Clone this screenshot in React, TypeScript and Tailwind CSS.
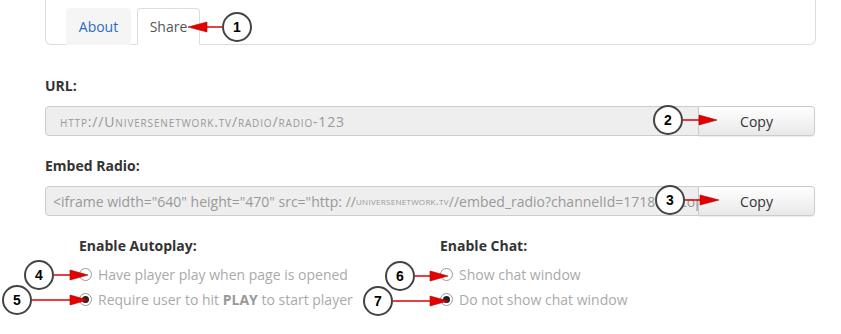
import React from 'react';

const font = { fontFamily: '"Open Sans", "Liberation Sans", sans-serif' };

function Callout({ n, x, y }: { n: number; x: number; y: number }) {
  return (
    <div
      className="absolute flex h-[30px] w-[30px] items-center justify-center rounded-full border-2 border-[#444] bg-white text-[14px] font-bold text-black"
      style={{ left: x - 15, top: y - 15, fontFamily: '"Liberation Sans", Arial, sans-serif' }}
    >
      {n}
    </div>
  );
}

// arrow: line from x1 to base of head, head points to tip
function Arrow({ x1, base, tip, y }: { x1: number; base: number; tip: number; y: number }) {
  return (
    <g>
      <line x1={x1} y1={y} x2={base} y2={y} stroke="#e10000" strokeWidth="1.5" />
      <polygon points={`${base},${y - 5} ${tip},${y} ${base},${y + 5}`} fill="#e30000" stroke="#b00000" strokeWidth="0.6" />
    </g>
  );
}

function CopyField({ children, pad }: { children: React.ReactNode; pad: string }) {
  return (
    <div className="flex h-[30px]">
      <div
        className={`flex flex-1 items-center overflow-hidden whitespace-nowrap rounded-l-[4px] border border-[#ccc] bg-[#eee] text-[14px] text-[#999] ${pad}`}
      >
        {children}
      </div>
      <button className="w-[116px] rounded-r-[4px] border border-l-0 border-[#ccc] bg-gradient-to-b from-white to-[#e8e8e8] text-[14px] text-[#333] shadow-[0_1px_1px_rgba(0,0,0,0.08)]">
        Copy
      </button>
    </div>
  );
}

function Radio({ checked, children }: { checked?: boolean; children: React.ReactNode }) {
  return (
    <div className="flex h-[25px] items-center gap-[6px] text-[14px] text-[#aaa]">
      <span className="flex h-[13px] w-[13px] items-center justify-center rounded-full border border-[#999] bg-white">
        {checked && <span className="h-[7px] w-[7px] rounded-full bg-[#222]" />}
      </span>
      <span>{children}</span>
    </div>
  );
}

export default function App() {
  return (
    <div className="relative h-[334px] w-[841px] overflow-hidden bg-white" style={font}>
      {/* tabs panel */}
      <div className="ml-[45px] mr-[25px] flex h-[45px] items-end gap-[6px] rounded-b-[6px] border-x border-b border-[#ddd] pl-[20px]">
        <div className="-mb-px flex h-[37px] w-[65px] items-center justify-center rounded-t-[4px] bg-[#f5f5f5] text-[14px] text-[#2b6cc4]">
          About
        </div>
        <div className="-mb-px flex h-[37px] w-[63px] items-center justify-center rounded-t-[4px] border border-b-white border-[#ddd] bg-white text-[14px] text-[#555]">
          Share
        </div>
      </div>

      <div className="pl-[45px] pr-[26px] pt-[32px]">
        <div className="mb-[11px] text-[14px] font-bold leading-[18px] text-[#333]">URL:</div>
        <CopyField pad="pl-[14px]">
          <span className="tracking-[0.85px]" style={{ fontVariant: 'small-caps' }}>
            http://Universenetwork.tv/radio/radio-123
          </span>
        </CopyField>

        <div className="mb-[11px] mt-[21px] text-[14px] font-bold leading-[18px] text-[#333]">Embed Radio:</div>
        <CopyField pad="pl-[7px]">
          &lt;iframe width="640" height="470" src="http: //
          <span className="text-[11px] tracking-[0.3px]" style={{ fontVariant: 'small-caps' }}>
            universenetwork.tv
          </span>
          //embed_radio?channelId=1718&amp;autoplay=false" frameborder="0"&gt;&lt;/iframe&gt;
        </CopyField>

        <div className="mt-[21px] grid grid-cols-[361px_1fr] pl-[34px]">
          <div>
            <div className="mb-[7px] text-[14px] font-bold leading-[18px] text-[#333]">Enable Autoplay:</div>
            <Radio>Have player play when page is opened</Radio>
            <Radio checked>
              Require user to hit <b className="text-[#999]">PLAY</b> to start player
            </Radio>
          </div>
          <div>
            <div className="mb-[7px] text-[14px] font-bold leading-[18px] text-[#333]">Enable Chat:</div>
            <Radio>Show chat window</Radio>
            <Radio checked>Do not show chat window</Radio>
          </div>
        </div>
      </div>

      {/* annotations */}
      <svg className="pointer-events-none absolute left-0 top-0" width="841" height="334">
        <Arrow x1={222} base={207} tip={188} y={27} />
        <Arrow x1={683} base={699} tip={717} y={120} />
        <Arrow x1={685} base={700} tip={719} y={200} />
        <Arrow x1={54} base={70} tip={88} y={275} />
        <Arrow x1={32} base={70} tip={88} y={300} />
        <Arrow x1={415} base={430} tip={448} y={276} />
        <Arrow x1={393} base={430} tip={448} y={301} />
      </svg>
      <Callout n={1} x={237} y={27} />
      <Callout n={2} x={668} y={120} />
      <Callout n={3} x={670} y={200} />
      <Callout n={4} x={39} y={275} />
      <Callout n={5} x={17} y={300} />
      <Callout n={6} x={400} y={276} />
      <Callout n={7} x={378} y={301} />
    </div>
  );
}
